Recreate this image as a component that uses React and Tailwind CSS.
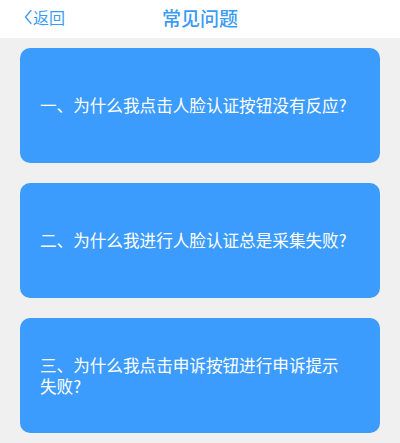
import React from "react";

const questions = [
  "一、为什么我点击人脸认证按钮没有反应?",
  "二、为什么我进行人脸认证总是采集失败?",
  "三、为什么我点击申诉按钮进行申诉提示失败?",
];

const App = () => {
  return (
    <div
      className="w-[400px] h-[443px] bg-[#f0f0f0] overflow-hidden"
      style={{ fontFamily: '"Noto Sans CJK SC", "Noto Sans", sans-serif' }}
    >
      <div className="relative h-[38px] bg-white flex items-center justify-center">
        <div className="absolute left-[24px] top-0 h-[34px] flex items-center text-[#3a9bf4]">
          <svg width="8" height="16" viewBox="0 0 8 16" className="mr-[1px]">
            <polyline
              points="7,1.5 1.5,8 7,14.5"
              fill="none"
              stroke="#3a9bf4"
              strokeWidth="1.3"
              strokeLinecap="round"
              strokeLinejoin="round"
            />
          </svg>
          <span className="text-[16px] leading-none">返回</span>
        </div>
        <div className="text-[19px] leading-none text-[#3a9bf4] font-medium -mt-[4px]">
          常见问题
        </div>
      </div>
      <div className="flex flex-col gap-5 px-5 pt-[10px]">
        {questions.map((q) => (
          <div
            key={q}
            className="h-[115px] rounded-[10px] bg-[#3c9cfd] flex items-center pl-5 pr-[30px]"
          >
            <p className="text-[16.6px] leading-[21px] text-white">{q}</p>
          </div>
        ))}
      </div>
    </div>
  );
};

export default App;
